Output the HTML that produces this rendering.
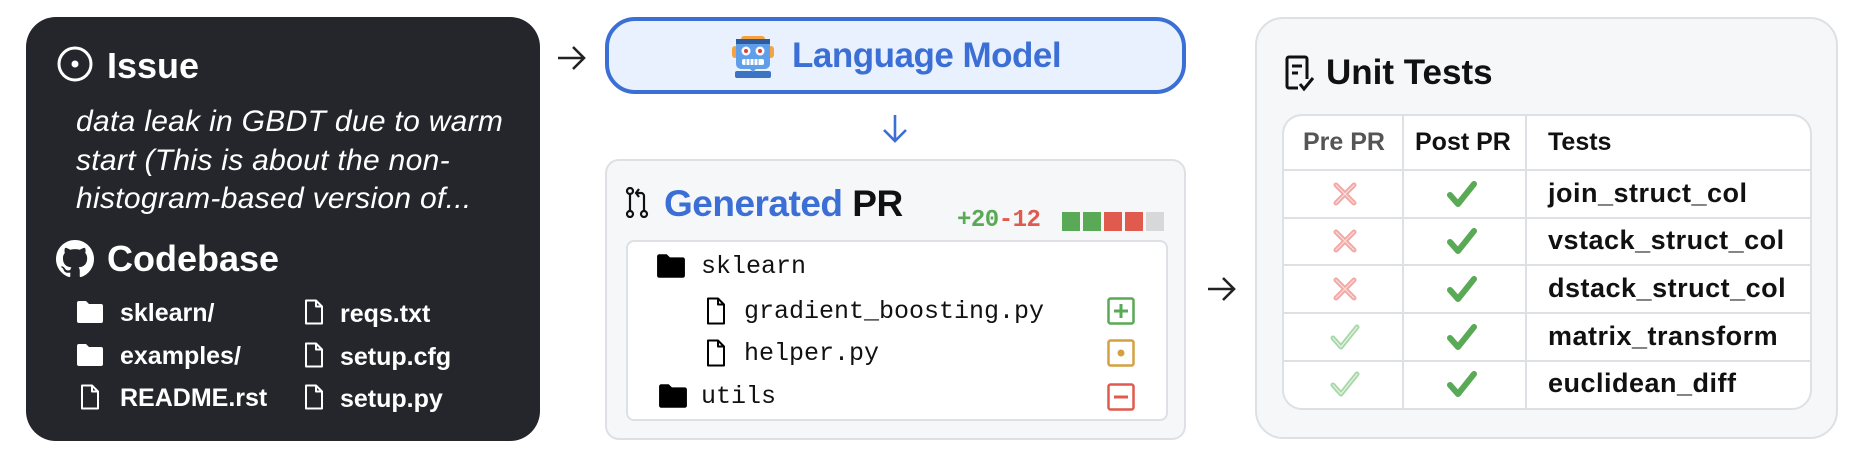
<!DOCTYPE html>
<html><head><meta charset="utf-8"><style>
*{margin:0;padding:0;box-sizing:border-box}
body{width:1860px;height:464px;background:#fff;position:relative;overflow:hidden;font-family:"Liberation Sans",sans-serif}
.a{position:absolute}
.dark{left:26px;top:17px;width:514px;height:424px;background:#24262b;border-radius:30px}
.w{color:#fff}
.h{font-weight:bold;font-size:36px;line-height:1}
.it{font-style:italic;font-size:30px;color:#fff;line-height:38.5px;letter-spacing:0.3px}
.f{font-size:25px;font-weight:bold;color:#fff;line-height:1}
.mono{font-family:"Liberation Mono","DejaVu Sans Mono",monospace;font-size:25px;line-height:1;color:#111}
.t{font-size:27px;font-weight:bold;color:#111;line-height:1;letter-spacing:0.5px}
</style></head><body>
<div class="a dark"></div>
<svg class="a" style="left:56px;top:45px" width="38" height="38" viewBox="0 0 38 38"><circle cx="19" cy="19" r="16" fill="none" stroke="#fff" stroke-width="3"/><circle cx="19" cy="19" r="3.5" fill="#fff"/></svg>
<div class="a h w" style="left:107px;top:48px">Issue</div>
<div class="a it" style="left:76px;top:103px">data leak in GBDT due to warm<br>start (This is about the non-<br>histogram-based version of...</div>
<svg class="a" style="left:56px;top:240px" width="38" height="38" viewBox="0 0 16 16"><path fill="#fff" d="M8 0C3.580 0 0 3.58 0 8c0 3.54 2.29 6.53 5.47 7.59.4.07.55-.17.55-.38 0-.19-.01-.82-.01-1.490-2.010.37-2.53-.49-2.69-.94-.09-.23-.48-.94-.82-1.13-.28-.15-.68-.52-.01-.53.63-.01 1.08.58 1.23.82.72 1.21 1.87.87 2.33.66.07-.52.28-.87.51-1.07-1.780-.2-3.64-.89-3.64-3.95 0-.87.31-1.59.82-2.15-.08-.2-.36-1.02.08-2.12 0 0 .67-.21 2.2.82.64-.18 1.32-.27 2-.27.68 0 1.36.09 2 .27 1.53-1.04 2.2-.82 2.2-.82.44 1.1.16 1.92.08 2.12.51.56.82 1.27.82 2.15 0 3.07-1.87 3.75-3.65 3.95.29.25.54.73.54 1.48 0 1.07-.01 1.93-.01 2.2 0 .21.15.46.55.38A8.013 8.013 0 0016 8c0-4.42-3.58-8-8-8z"/></svg>
<div class="a h w" style="left:107px;top:241px">Codebase</div>
<svg class="a" style="left:76px;top:300px" width="28" height="24" viewBox="0 0 28 24"><path d="M1 3a2 2 0 0 1 2-2h7l3 3h12a2 2 0 0 1 2 2v15a2 2 0 0 1-2 2H3a2 2 0 0 1-2-2z" fill="#fff"/></svg>
<div class="a f" style="left:120px;top:301px">sklearn/</div>
<svg class="a" style="left:76px;top:343px" width="28" height="24" viewBox="0 0 28 24"><path d="M1 3a2 2 0 0 1 2-2h7l3 3h12a2 2 0 0 1 2 2v15a2 2 0 0 1-2 2H3a2 2 0 0 1-2-2z" fill="#fff"/></svg>
<div class="a f" style="left:120px;top:344px">examples/</div>
<svg class="a" style="left:80px;top:384px" width="20" height="26" viewBox="0 0 20 26"><path d="M2 1.5h10l6 6v17H2z M12 1.5v6h6" fill="none" stroke="#fff" stroke-width="2" stroke-linejoin="round"/></svg>
<div class="a f" style="left:120px;top:386px">README.rst</div>
<svg class="a" style="left:304px;top:299px" width="20" height="26" viewBox="0 0 20 26"><path d="M2 1.5h10l6 6v17H2z M12 1.5v6h6" fill="none" stroke="#fff" stroke-width="2" stroke-linejoin="round"/></svg>
<div class="a f" style="left:340px;top:302px">reqs.txt</div>
<svg class="a" style="left:304px;top:342px" width="20" height="26" viewBox="0 0 20 26"><path d="M2 1.5h10l6 6v17H2z M12 1.5v6h6" fill="none" stroke="#fff" stroke-width="2" stroke-linejoin="round"/></svg>
<div class="a f" style="left:340px;top:345px">setup.cfg</div>
<svg class="a" style="left:304px;top:384px" width="20" height="26" viewBox="0 0 20 26"><path d="M2 1.5h10l6 6v17H2z M12 1.5v6h6" fill="none" stroke="#fff" stroke-width="2" stroke-linejoin="round"/></svg>
<div class="a f" style="left:340px;top:387px">setup.py</div>

<svg class="a" style="left:556px;top:44px" width="32" height="28" viewBox="0 0 32 28"><path d="M2 14h26M17 3l11 11-11 11" fill="none" stroke="#222" stroke-width="2.6"/></svg>
<svg class="a" style="left:1206px;top:275px" width="32" height="28" viewBox="0 0 32 28"><path d="M2 14h26M17 3l11 11-11 11" fill="none" stroke="#222" stroke-width="2.6"/></svg>
<svg class="a" style="left:881px;top:114px" width="28" height="30" viewBox="0 0 28 30"><path d="M14 1v26M3 16l11 11 11-11" fill="none" stroke="#3b6fd6" stroke-width="2.6"/></svg>

<div class="a" style="left:605px;top:17px;width:581px;height:77px;background:#e8f1fd;border:4px solid #3b6fd6;border-radius:30px"></div>
<svg class="a" style="left:732px;top:35px" width="42" height="44" viewBox="0 0 42 44"><rect x="9" y="1" width="24" height="6" rx="3" fill="#f4a340"/><rect x="0" y="11" width="6" height="12" rx="3" fill="#f4a340"/><rect x="36" y="11" width="6" height="12" rx="3" fill="#f4a340"/><rect x="4" y="4" width="34" height="30" rx="5" fill="#5f9ee8"/><rect x="4" y="4" width="34" height="5" fill="#2e5c9e"/><circle cx="14" cy="16" r="4.5" fill="#fff"/><circle cx="28" cy="16" r="4.5" fill="#fff"/><circle cx="14" cy="16" r="2" fill="#e0413a"/><circle cx="28" cy="16" r="2" fill="#e0413a"/><rect x="10" y="24" width="22" height="6" rx="2" fill="#fff"/><path d="M14 24v6M18 24v6M22 24v6M26 24v6" stroke="#5f9ee8" stroke-width="1"/><rect x="3" y="36" width="36" height="7" rx="2" fill="#3a72c4"/><path d="M18 34h6l-3 3z" fill="#5f9ee8"/></svg>
<div class="a" style="left:792px;top:38px;font-size:35px;font-weight:bold;color:#3b6fd6;line-height:1;letter-spacing:-0.5px">Language Model</div>

<div class="a" style="left:605px;top:159px;width:581px;height:281px;background:#f6f7f9;border:2px solid #dde0e4;border-radius:14px"></div>
<svg class="a" style="left:625px;top:187px" width="24" height="31" viewBox="0 0 24 31"><circle cx="5" cy="4" r="3" fill="none" stroke="#111" stroke-width="2.2"/><circle cx="5" cy="27" r="3" fill="none" stroke="#111" stroke-width="2.2"/><circle cx="19" cy="27" r="3" fill="none" stroke="#111" stroke-width="2.2"/><path d="M5 7v17M19 24V9a3 3 0 0 0-3-3h-5M14 2l-3 4 3 4" fill="none" stroke="#111" stroke-width="2.2"/></svg>
<div class="a" style="left:664px;top:185px;font-size:37px;font-weight:bold;line-height:1;letter-spacing:-0.5px"><span style="color:#3b6fd6">Generated</span> <span style="color:#111">PR</span></div>
<div class="a" style="left:957px;top:209px;font-family:'Liberation Mono',monospace;font-weight:bold;font-size:24px;line-height:1;letter-spacing:-0.5px"><span style="color:#5aa956">+20</span><span style="color:#e05a4e">-12</span></div>
<div class="a" style="left:1062px;top:212px;width:18px;height:19px;background:#5aa956"></div>
<div class="a" style="left:1083px;top:212px;width:18px;height:19px;background:#5aa956"></div>
<div class="a" style="left:1104px;top:212px;width:18px;height:19px;background:#e05a4e"></div>
<div class="a" style="left:1125px;top:212px;width:18px;height:19px;background:#e05a4e"></div>
<div class="a" style="left:1146px;top:212px;width:18px;height:19px;background:#d8d8d8"></div>
<div class="a" style="left:626px;top:240px;width:542px;height:181px;background:#fff;border:2px solid #dde0e4;border-radius:8px"></div>
<svg class="a" style="left:656px;top:253px" width="30" height="26" viewBox="0 0 28 24"><path d="M1 3a2 2 0 0 1 2-2h7l3 3h12a2 2 0 0 1 2 2v15a2 2 0 0 1-2 2H3a2 2 0 0 1-2-2z" fill="#000"/></svg>
<div class="a mono" style="left:701px;top:254px">sklearn</div>
<svg class="a" style="left:706px;top:297px" width="20" height="28" viewBox="0 0 20 28"><path d="M2 1.5h10l6 6v19H2z M12 1.5v6h6" fill="none" stroke="#000" stroke-width="2" stroke-linejoin="round"/></svg>
<div class="a mono" style="left:744px;top:299px">gradient_boosting.py</div>
<svg class="a" style="left:706px;top:339px" width="20" height="28" viewBox="0 0 20 28"><path d="M2 1.5h10l6 6v19H2z M12 1.5v6h6" fill="none" stroke="#000" stroke-width="2" stroke-linejoin="round"/></svg>
<div class="a mono" style="left:744px;top:341px">helper.py</div>
<svg class="a" style="left:658px;top:383px" width="30" height="26" viewBox="0 0 28 24"><path d="M1 3a2 2 0 0 1 2-2h7l3 3h12a2 2 0 0 1 2 2v15a2 2 0 0 1-2 2H3a2 2 0 0 1-2-2z" fill="#000"/></svg>
<div class="a mono" style="left:701px;top:384px">utils</div>
<svg class="a" style="left:1107px;top:297px" width="28" height="28" viewBox="0 0 28 28"><rect x="1.5" y="1.5" width="25" height="25" rx="2" fill="none" stroke="#5aa956" stroke-width="2.5"/><path d="M14 7v14M7 14h14" stroke="#5aa956" stroke-width="3"/></svg>
<svg class="a" style="left:1107px;top:339px" width="28" height="28" viewBox="0 0 28 28"><rect x="1.5" y="1.5" width="25" height="25" rx="2" fill="none" stroke="#d4a040" stroke-width="2.5"/><circle cx="14" cy="14" r="3.5" fill="#d4a040"/></svg>
<svg class="a" style="left:1107px;top:383px" width="28" height="28" viewBox="0 0 28 28"><rect x="1.5" y="1.5" width="25" height="25" rx="2" fill="none" stroke="#e05a4e" stroke-width="2.5"/><path d="M7 14h14" stroke="#e05a4e" stroke-width="3"/></svg>

<div class="a" style="left:1255px;top:17px;width:583px;height:422px;background:#f6f7f9;border:2px solid #dde0e4;border-radius:28px"></div>
<svg class="a" style="left:1284px;top:55px" width="34" height="38" viewBox="0 0 34 38"><path d="M14 33H5a2 2 0 0 1-2-2V4a2 2 0 0 1 2-2h16a2 2 0 0 1 2 2v20" fill="none" stroke="#111" stroke-width="3"/><path d="M8 11h10M8 18h6" stroke="#111" stroke-width="3"/><path d="M16 29l4 5 9-11" fill="none" stroke="#111" stroke-width="3"/></svg>
<div class="a" style="left:1326px;top:55px;font-size:35px;font-weight:bold;color:#111;line-height:1">Unit Tests</div>
<div class="a" style="left:1282px;top:114px;width:530px;height:296px;background:#fff;border:2px solid #dde0e4;border-radius:20px;overflow:hidden">
<div class="a" style="left:118px;top:0;width:2px;height:296px;background:#dde0e4"></div>
<div class="a" style="left:241px;top:0;width:2px;height:296px;background:#dde0e4"></div>
<div class="a" style="left:0;top:53px;width:530px;height:2px;background:#dde0e4"></div>
<div class="a" style="left:0;top:101px;width:530px;height:2px;background:#dde0e4"></div>
<div class="a" style="left:0;top:148px;width:530px;height:2px;background:#dde0e4"></div>
<div class="a" style="left:0;top:196px;width:530px;height:2px;background:#dde0e4"></div>
<div class="a" style="left:0;top:244px;width:530px;height:2px;background:#dde0e4"></div>
</div>
<div class="a" style="left:1303px;top:130px;font-size:25px;font-weight:bold;color:#555;line-height:1">Pre PR</div>
<div class="a" style="left:1415px;top:130px;font-size:25px;font-weight:bold;color:#111;line-height:1">Post PR</div>
<div class="a" style="left:1548px;top:130px;font-size:25px;font-weight:bold;color:#111;line-height:1">Tests</div>
<div class="a t" style="left:1548px;top:180px">join_struct_col</div>
<div class="a t" style="left:1548px;top:227px">vstack_struct_col</div>
<div class="a t" style="left:1548px;top:275px">dstack_struct_col</div>
<div class="a t" style="left:1548px;top:323px">matrix_transform</div>
<div class="a t" style="left:1548px;top:370px">euclidean_diff</div>
<svg class="a" style="left:1332px;top:181px" width="26" height="26" viewBox="0 0 26 26"><path d="M4 4l18 18M22 4L4 22" stroke="#f2a9a5" stroke-width="5" stroke-linecap="round"/><path d="M4 4l18 18M22 4L4 22" stroke="#fbe0de" stroke-width="1.2" stroke-linecap="round"/></svg>
<svg class="a" style="left:1332px;top:228px" width="26" height="26" viewBox="0 0 26 26"><path d="M4 4l18 18M22 4L4 22" stroke="#f2a9a5" stroke-width="5" stroke-linecap="round"/><path d="M4 4l18 18M22 4L4 22" stroke="#fbe0de" stroke-width="1.2" stroke-linecap="round"/></svg>
<svg class="a" style="left:1332px;top:276px" width="26" height="26" viewBox="0 0 26 26"><path d="M4 4l18 18M22 4L4 22" stroke="#f2a9a5" stroke-width="5" stroke-linecap="round"/><path d="M4 4l18 18M22 4L4 22" stroke="#fbe0de" stroke-width="1.2" stroke-linecap="round"/></svg>
<svg class="a" style="left:1330px;top:324px" width="30" height="26" viewBox="0 0 30 26"><path d="M3 14l8 9L27 3" fill="none" stroke="#a8d8a8" stroke-width="5" stroke-linecap="round" stroke-linejoin="round"/><path d="M3 14l8 9L27 3" fill="none" stroke="#e6f4e6" stroke-width="1.2" stroke-linecap="round" stroke-linejoin="round"/></svg>
<svg class="a" style="left:1330px;top:371px" width="30" height="26" viewBox="0 0 30 26"><path d="M3 14l8 9L27 3" fill="none" stroke="#a8d8a8" stroke-width="5" stroke-linecap="round" stroke-linejoin="round"/><path d="M3 14l8 9L27 3" fill="none" stroke="#e6f4e6" stroke-width="1.2" stroke-linecap="round" stroke-linejoin="round"/></svg>
<svg class="a" style="left:1447px;top:181px" width="30" height="26" viewBox="0 0 30 26"><path d="M3 14l8 9L27 3" fill="none" stroke="#5aa956" stroke-width="6" stroke-linecap="round" stroke-linejoin="round"/></svg>
<svg class="a" style="left:1447px;top:228px" width="30" height="26" viewBox="0 0 30 26"><path d="M3 14l8 9L27 3" fill="none" stroke="#5aa956" stroke-width="6" stroke-linecap="round" stroke-linejoin="round"/></svg>
<svg class="a" style="left:1447px;top:276px" width="30" height="26" viewBox="0 0 30 26"><path d="M3 14l8 9L27 3" fill="none" stroke="#5aa956" stroke-width="6" stroke-linecap="round" stroke-linejoin="round"/></svg>
<svg class="a" style="left:1447px;top:324px" width="30" height="26" viewBox="0 0 30 26"><path d="M3 14l8 9L27 3" fill="none" stroke="#5aa956" stroke-width="6" stroke-linecap="round" stroke-linejoin="round"/></svg>
<svg class="a" style="left:1447px;top:371px" width="30" height="26" viewBox="0 0 30 26"><path d="M3 14l8 9L27 3" fill="none" stroke="#5aa956" stroke-width="6" stroke-linecap="round" stroke-linejoin="round"/></svg>
</body></html>
